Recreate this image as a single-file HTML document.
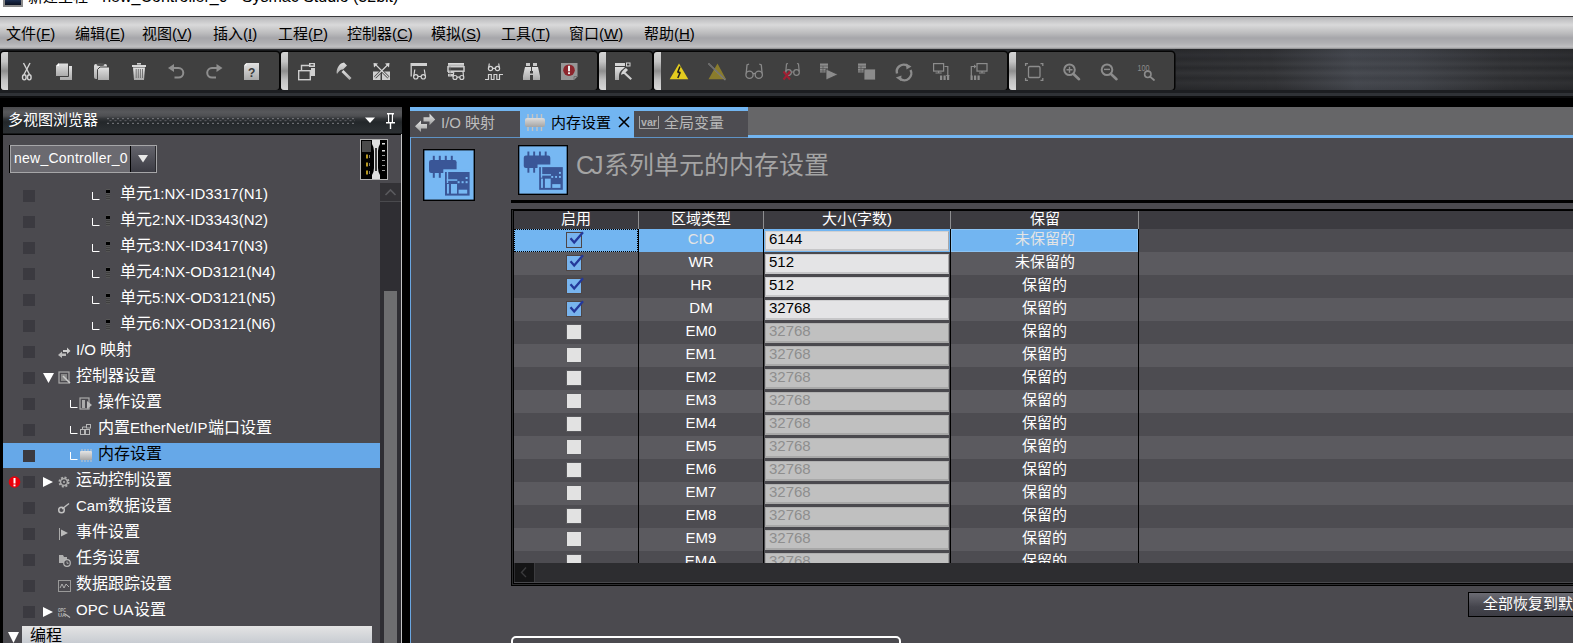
<!DOCTYPE html>
<html lang="zh-CN">
<head>
<meta charset="utf-8">
<style>
*{box-sizing:border-box;margin:0;padding:0}
html,body{width:1573px;height:643px;overflow:hidden;background:#000}
body{position:relative;font-family:"Liberation Sans",sans-serif;color:#fff}
.a{position:absolute}
#title{left:0;top:0;width:1573px;height:16px;background:#fff;overflow:hidden}
#title .t{left:28px;top:-11px;font-size:15px;color:#000;white-space:nowrap;line-height:16px}
#tline{left:0;top:16px;width:1573px;height:1px;background:#3a3a3c}
#menu{left:0;top:17px;width:1573px;height:32px;background:linear-gradient(#b4b4b6 0px,#c4c4c6 3px,#d9d9da 8px,#bcbcbe 16px,#a6a6aa 21px,#b0b0b3 26px,#c0c0c2 30px,#8a8a8c 32px)}
#menu span{position:absolute;top:8px;font-size:15px;color:#000;line-height:18px;white-space:nowrap}
#tb{left:0;top:49px;width:1573px;height:49px;background:#2a2c30}
#tbr{left:1175px;top:49px;width:398px;height:41px;background:linear-gradient(80deg,rgba(0,0,0,.12) 0%,rgba(0,0,0,0) 25%,rgba(140,150,170,.2) 45%,rgba(140,150,170,.16) 60%,rgba(0,0,0,0) 82%,rgba(0,0,0,.12) 100%),linear-gradient(#2a2b2e 0,#333438 6px,#2d2e31 10px,#36373a 15px,#2c2d30 19px,#38393c 24px,#2d2e31 29px,#353639 34px,#2a2b2e 41px)}
.grp{position:absolute;top:52px;height:38px;background:#404040;border-radius:3px;box-shadow:0 0 0 1.5px #050505}
.grip{position:absolute;top:52px;width:7px;height:38px;border-radius:3px 0 0 3px;background:linear-gradient(#d4d4d4,#c4c4c4 25%,#8e8e8e 50%,#c4c4c4 75%,#d8d8d8)}
#lp{left:3px;top:107px;width:399px;height:536px;background:#4b4a4f}
#lph{left:3px;top:107px;width:399px;height:28px;background:linear-gradient(#4a4a4d 0px,#58595c 5px,#4e4f52 9px,#303336 12px,#23272a 15px,#2a2e31 22px,#2c3033 26px,#000 27px,#000 28px)}
.tr{position:absolute;font-size:16px;line-height:20px;white-space:nowrap}
.l{font-size:15px}
.th{position:absolute;font-size:15px;line-height:20px;text-align:center;white-space:nowrap;color:#fff}
.td{position:absolute;font-size:15px;line-height:19px;text-align:center;white-space:nowrap}
</style>
</head>
<body>
<div id="title" class="a"><div class="a" style="left:3px;top:-8px;width:20px;height:15px;background:linear-gradient(#6a8ab8,#1a2a4a 60%,#0a1020);border:2px solid #8a8a8a"></div><div class="t a">新建工程<span style="font-size:16px"> - new_Controller_0 - Sysmac Studio (32bit)</span></div></div>
<div id="tline" class="a"></div>
<div id="menu" class="a">
<span style="left:6px">文件(<u>F</u>)</span>
<span style="left:75px">编辑(<u>E</u>)</span>
<span style="left:142px">视图(<u>V</u>)</span>
<span style="left:213px">插入(<u>I</u>)</span>
<span style="left:278px">工程(<u>P</u>)</span>
<span style="left:347px">控制器(<u>C</u>)</span>
<span style="left:431px">模拟(<u>S</u>)</span>
<span style="left:501px">工具(<u>T</u>)</span>
<span style="left:569px">窗口(<u>W</u>)</span>
<span style="left:644px">帮助(<u>H</u>)</span>
</div>
<div id="tb" class="a"></div>
<div id="tbr" class="a"></div>
<div class="grp" style="left:1px;width:278px"></div><div class="grip" style="left:1px"></div>
<div class="grp" style="left:281px;width:316px"></div><div class="grip" style="left:281px"></div>
<div class="grp" style="left:599px;width:53px"></div><div class="grip" style="left:599px"></div>
<div class="grp" style="left:654px;width:353px"></div><div class="grip" style="left:654px"></div>
<div class="grp" style="left:1009px;width:165px"></div><div class="grip" style="left:1009px"></div>
<div class="a" style="left:0;top:90px;width:1573px;height:3px;background:#1c1e21"></div>
<div class="a" style="left:0;top:93px;width:1573px;height:3px;background:#2f3236"></div>
<div class="a" style="left:0;top:96px;width:1573px;height:2px;background:#0c0d0e"></div>

<svg class="a" style="left:0;top:0" width="1573" height="100" viewBox="0 0 1573 100">
<defs>
<linearGradient id="lg" x1="0" y1="0" x2="0" y2="1"><stop offset="0" stop-color="#e2e2e2"/><stop offset="1" stop-color="#a9a9a9"/></linearGradient>
<linearGradient id="rbm" x1="0" y1="0" x2="0" y2="1"><stop offset="0" stop-color="#2c2d30"/><stop offset="0.3" stop-color="#3a3b3f"/><stop offset="0.5" stop-color="#2a2b2e"/><stop offset="0.75" stop-color="#38393c"/><stop offset="1" stop-color="#2b2c2f"/></linearGradient>
</defs>
<!-- scissors -->
<g fill="none" stroke="#d4d4d4" stroke-width="1.4">
<path d="M23.5,63 L29.5,74.5"/><path d="M30,63 L24,74.5"/>
<ellipse cx="24.3" cy="77.3" rx="1.8" ry="2.6"/><ellipse cx="29.3" cy="77.3" rx="1.8" ry="2.6"/>
</g>
<!-- copy -->
<rect x="60" y="66" width="12" height="14" fill="url(#lg)"/>
<path d="M58.5,63 L68.5,63 L68.5,76.5 L55.5,76.5 L55.5,66 Z" fill="url(#lg)" stroke="#404040" stroke-width="1"/>
<path d="M56,66 L59,63 L59,66 Z" fill="#fff"/>
<!-- paste -->
<rect x="94" y="64" width="13" height="15" rx="2" fill="url(#lg)"/>
<ellipse cx="100.5" cy="64.5" rx="4" ry="1.5" fill="#555"/>
<path d="M100,67 L109.5,67 L109.5,80.5 L97.5,80.5 L97.5,69.5 Z" fill="url(#lg)" stroke="#404040" stroke-width="1"/>
<!-- trash -->
<rect x="137" y="63" width="4" height="1.6" fill="#ccc"/>
<rect x="132" y="65" width="14" height="2" fill="#d8d8d8"/>
<path d="M133,67.5 L145,67.5 L144,80 L134,80 Z" fill="url(#lg)"/>
<path d="M136.2,69 V78 M138.3,69 V78 M140.4,69 V78 M142.5,69 V78" stroke="#6a6a6a" stroke-width="0.9"/>
<!-- undo -->
<path d="M168,68 L174,64 L174,72 Z" fill="#8e8e8e"/>
<path d="M173,68 L178.5,68 A4.8,4.8 0 0 1 178.5,77.6 L174.5,77.6" fill="none" stroke="#8e8e8e" stroke-width="2"/>
<!-- redo -->
<path d="M222.5,68 L216.5,64 L216.5,72 Z" fill="#8e8e8e"/>
<path d="M217.5,68 L212,68 A4.8,4.8 0 0 0 212,77.6 L216,77.6" fill="none" stroke="#8e8e8e" stroke-width="2"/>
<!-- help -->
<path d="M246.5,63 L259,63 L259,80 L244,80 L244,65.5 Z" fill="url(#lg)"/>
<path d="M244,65.5 L246.5,63 L246.5,65.5 Z" fill="#fff"/>
<text x="251.7" y="76.5" font-size="12" font-weight="bold" fill="#3a3a3a" text-anchor="middle" font-family="Liberation Sans">?</text>

<!-- window link -->
<g fill="none" stroke="#cdcdcd" stroke-width="1.4">
<rect x="298.7" y="70.7" width="11.6" height="9"/><path d="M301.5,70.5 V65.5 H309"/>
</g>
<rect x="309" y="63" width="6" height="4" fill="#d0d0d0"/><rect x="310.5" y="64" width="3" height="1.5" fill="#555"/>
<rect x="311" y="68" width="4" height="8" fill="#d0d0d0"/>
<!-- hammer -->
<path d="M341,63.5 L344,62.5 L347,65.5 L343,69.5 C341,69 339,71 337,74 C336,72 337,67 341,63.5 Z" fill="url(#lg)"/>
<path d="M343.5,70 L351.5,78 L349.5,80 L341.5,72 Z" fill="url(#lg)"/>
<!-- cross arrows -->
<rect x="373" y="71.5" width="7.5" height="8.5" fill="#cfcfcf"/><rect x="382" y="71.5" width="8" height="8.5" fill="#cfcfcf"/>
<g stroke="#404040" stroke-width="2.6"><path d="M375,64 L388.5,77.5 M388.5,64 L375,77.5"/></g>
<g stroke="#d8d8d8" stroke-width="1.1"><path d="M375,64 L388.5,77.5 M388.5,64 L375,77.5"/></g>
<path d="M373.5,63 L378,63.5 L374,67.5 Z M389.5,63 L385,63.5 L389,67.5 Z" fill="#d8d8d8"/>
<!-- glasses window -->
<rect x="410.5" y="63" width="16.5" height="3" fill="#d0d0d0"/>
<path d="M411.2,66 V76.5" stroke="#d0d0d0" stroke-width="1.3"/>
<g fill="none" stroke="#d4d4d4" stroke-width="1.2"><circle cx="415.8" cy="76.8" r="2.2"/><circle cx="423.3" cy="76.8" r="2.2"/><path d="M418,76.5 H421 M413.8,76 L414.8,69.5 M425.3,76 L424.3,69.5"/></g>
<!-- table glasses -->
<rect x="448" y="63" width="16" height="3.2" fill="url(#lg)"/>
<rect x="448" y="66.7" width="16" height="4.5" fill="none" stroke="#cfcfcf" stroke-width="1.5"/>
<rect x="448" y="71" width="5" height="5.5" fill="#cfcfcf"/><path d="M448,73.5 H453" stroke="#555" stroke-width="1"/><path d="M450,66.5 V76" stroke="#777" stroke-width="0.8"/>
<g fill="none" stroke="#d4d4d4" stroke-width="1.2"><circle cx="455" cy="77.5" r="2"/><circle cx="461.8" cy="77.5" r="2"/><path d="M457,77.2 H459.8 M453.2,76.8 L453.8,71.5 M463.6,76.8 L463,71.5"/></g>
<!-- glasses pulse -->
<g fill="none" stroke="#d4d4d4" stroke-width="1.2"><circle cx="490.5" cy="68.5" r="2.1"/><circle cx="497.5" cy="68.5" r="2.1"/><path d="M492.6,68.3 H495.4 M488.6,68 L489.3,63.5 M499.4,68 L498.7,63.5"/>
<path d="M485,79.5 H488.5 V74.5 H491.3 V79.5 H494 V74.5 H496.8 V79.5 H499.5 V74.5 H503"/></g>
<!-- binoculars -->
<rect x="526" y="63" width="4" height="3" fill="#c8c8c8"/><rect x="533" y="63" width="4" height="3" fill="#c8c8c8"/>
<path d="M525,67 H531 V71 H532 V67 H538 L540,76 V80 H533 V75 H530 V80 H523 V76 Z" fill="url(#lg)"/>
<rect x="530" y="71" width="3" height="2.5" fill="#404040"/>
<!-- error page -->
<path d="M561,63 H577.5 V76.5 L574,80 H561 Z" fill="#979797"/>
<path d="M574,80 V76.5 H577.5" fill="none" stroke="#6a6a6a" stroke-width="0.8"/>
<circle cx="569" cy="70.2" r="5.8" fill="#8d262d"/>
<rect x="568" y="65.8" width="2" height="5.5" fill="#eee"/><rect x="568" y="72.3" width="2" height="1.8" fill="#eee"/>
<!-- edit window hammer -->
<rect x="615" y="63" width="10" height="3" fill="#d4d4d4"/><rect x="626.5" y="63" width="3.5" height="3" fill="none" stroke="#d4d4d4" stroke-width="1"/>
<path d="M615,67 H625 L623,69 C620,71 619,73 619,76 V80 H615 Z" fill="url(#lg)"/>
<path d="M621,75 C621,72 623,70 626,68 L628,70 L624,74 C623,74 622,74 621,75 Z" fill="#d4d4d4"/>
<path d="M625,72 L632,78.5 L630.5,80 L623.5,73.5 Z" fill="#cfcfcf"/>
<!-- warning -->
<path d="M679,63.5 L688.3,79.2 H669.7 Z" fill="#e3cc1f"/>
<path d="M680,66.5 L677.6,72.5 M677.6,72.5 L680.3,72.3 M680.3,72.3 L677.8,78" fill="none" stroke="#1e1e1e" stroke-width="1.5" stroke-linejoin="round"/>
<!-- warning disabled -->
<path d="M717.5,63.5 L726,79.2 H708.5 Z" fill="#8a7c2c"/>
<path d="M708.5,63.5 L725.5,80" stroke="#8f8f8f" stroke-width="1.6"/>
<path d="M709,63.8 L726,80.3" stroke="#404040" stroke-width="0.6"/>
<!-- glasses -->
<g fill="none" stroke="#8a8a8a" stroke-width="1.3"><circle cx="749.5" cy="74.8" r="3.6"/><circle cx="758.8" cy="74.8" r="3.6"/><path d="M753,74 Q754,72.8 755.2,74 M746.2,73.5 L747,65 L749,64 M762.1,73.5 L761.3,65 L759.3,64"/></g>
<!-- glasses X -->
<g fill="none" stroke="#888" stroke-width="1.2"><circle cx="788.5" cy="72.5" r="2.8"/><circle cx="796.5" cy="72.5" r="2.8"/><path d="M791.3,72 H793.7 M785.8,71.5 L786.5,64 L788,63.5 M799.2,71.5 L798.5,64 L797,63.5"/></g>
<path d="M783.5,71.5 L790,79.5 M790,71.5 L783.5,79.5" stroke="#a01e32" stroke-width="2"/>
<!-- table play -->
<rect x="820" y="63.5" width="8" height="9" fill="#8c8c8c"/><path d="M820,66 H828 M820,68.5 H828 M820,71 H828 M823,66 V72.5" stroke="#555" stroke-width="0.7"/>
<path d="M826,69 L838,74.5 L826,80 Z" fill="#8c8c8c" stroke="#404040" stroke-width="0.8"/>
<!-- table stop -->
<rect x="858" y="63.5" width="8" height="9" fill="#8c8c8c"/><path d="M858,66 H866 M858,68.5 H866 M858,71 H866 M861,66 V72.5" stroke="#555" stroke-width="0.7"/>
<rect x="864" y="69" width="11.5" height="11" fill="#8c8c8c" stroke="#404040" stroke-width="0.8"/>
<!-- refresh -->
<g fill="none" stroke="#8c8c8c" stroke-width="2.4"><path d="M897,73.5 A7,7 0 0 1 907.5,65.8"/><path d="M910.5,70 A7,7 0 0 1 900,78.8"/></g>
<path d="M906,63.5 L911.5,66.5 L906.5,69.5 Z M901,81 L895.8,77.6 L901.5,75.5 Z" fill="#8c8c8c"/>
<!-- monitor down -->
<g fill="none" stroke="#8c8c8c" stroke-width="1.2"><rect x="933.6" y="63.6" width="10" height="7.5"/><path d="M938.6,71 V72.8 M935.5,73 H941.7 M944.5,66.5 H947.8 V76"/></g>
<path d="M945.8,75 L949.8,75 L947.8,77.5 Z" fill="#8c8c8c"/>
<rect x="940" y="75.5" width="2.2" height="4.5" fill="#8c8c8c"/><rect x="943.5" y="75.5" width="2.2" height="4.5" fill="#8c8c8c"/><rect x="947" y="75.5" width="2.2" height="4.5" fill="#8c8c8c"/>
<!-- up monitor -->
<g fill="none" stroke="#8c8c8c" stroke-width="1.2"><rect x="977" y="63.6" width="10" height="7.5"/><path d="M982,71 V72.8 M979,73 H985.2 M971.3,76 V66.5 H974.5"/></g>
<path d="M974,64.5 L976.5,66.5 L974,68.5 Z" fill="#8c8c8c"/>
<rect x="970.5" y="75.5" width="2.2" height="4.5" fill="#8c8c8c"/><rect x="974" y="75.5" width="2.2" height="4.5" fill="#8c8c8c"/><rect x="977.5" y="75.5" width="2.2" height="4.5" fill="#8c8c8c"/>
<!-- fit -->
<g fill="none" stroke="#8c8c8c" stroke-width="1.3"><rect x="1028.5" y="66.5" width="11.5" height="11" rx="1.2"/>
<path d="M1025.6,66 V63.6 H1028 M1040.5,63.6 H1042.8 V66 M1025.6,78 V80.3 H1028 M1040.5,80.3 H1042.8 V78"/></g>
<!-- zoom in -->
<g fill="none" stroke="#8c8c8c"><circle cx="1069.5" cy="69.8" r="5.3" stroke-width="2"/><path d="M1073.5,74 L1079,79.2" stroke-width="2.6" stroke-linecap="round"/><path d="M1066.5,69.8 H1072.5 M1069.5,66.8 V72.8" stroke-width="1.4"/></g>
<!-- zoom out -->
<g fill="none" stroke="#8c8c8c"><circle cx="1107" cy="69.8" r="5.3" stroke-width="2"/><path d="M1111,74 L1116.5,79.2" stroke-width="2.6" stroke-linecap="round"/><path d="M1104,69.4 H1110" stroke-width="1.4"/></g>
<!-- 100 -->
<text x="1137.5" y="71" font-size="8.5" fill="#8c8c8c" font-family="Liberation Sans" textLength="12" lengthAdjust="spacingAndGlyphs">100</text>
<g fill="none" stroke="#8c8c8c"><circle cx="1147.8" cy="74.3" r="3.2" stroke-width="1.6"/><path d="M1150,76.6 L1154,80" stroke-width="1.8" stroke-linecap="round"/></g>
</svg>
<div id="lp" class="a"></div>
<div id="lph" class="a"></div>
<div class="a" style="left:8px;top:110px;font-size:15px;line-height:20px;color:#fff;white-space:nowrap;font-weight:500">多视图浏览器</div>
<svg class="a" style="left:107px;top:117px" width="248" height="8"><defs><pattern id="dpa" width="5" height="8" patternUnits="userSpaceOnUse"><rect x="0" y="1" width="2" height="1.2" fill="#6c6e72"/><rect x="2.5" y="3" width="2" height="1.2" fill="#55575b"/><rect x="0" y="5.8" width="2" height="1.2" fill="#6c6e72"/></pattern></defs><rect width="248" height="8" fill="url(#dpa)"/></svg>
<svg class="a" style="left:360px;top:110px" width="40" height="22"><path d="M5,7.5 H15 L10,13 Z" fill="#fff"/><path d="M27,3 H34 V4.5 H33 V12 H35 V13.5 H31.2 V19 H29.8 V13.5 H26 V12 H28 V4.5 H27 Z" fill="#fff"/><rect x="29.2" y="4.5" width="2.6" height="7.5" fill="#24272a"/></svg>
<div class="a" style="left:3px;top:135px;width:398px;height:508px;background:#4b4a4f"></div>
<div class="a" style="left:401px;top:134px;width:1px;height:509px;background:#c4c4c4"></div>
<div class="a" style="left:10px;top:145px;width:147px;height:28px;border:1px solid #a6a6a8;background:#6b6a70"></div><div class="a" style="left:9px;top:145px;width:1px;height:28px;background:#000"></div>
<div class="a" style="left:130px;top:146px;width:26px;height:26px;background:linear-gradient(#64646c,#3c3c44);border-left:1px solid #000;border-right:1px solid #2a2a2e"></div>
<svg class="a" style="left:136px;top:153px" width="14" height="12"><path d="M2,2 H12 L7,9.5 Z" fill="#e8e8e8"/></svg>
<div class="a" style="left:14px;top:148px;font-size:14px;line-height:20px;color:#fff;white-space:nowrap;letter-spacing:0.25px">new_Controller_0</div>
<svg class="a" style="left:360px;top:139px" width="28" height="41" viewBox="0 0 28 41">
<rect x="0.5" y="0.5" width="27" height="40" fill="#000" stroke="#b4b4b4" stroke-width="1"/>
<rect x="2" y="2" width="9" height="11" fill="#4a4a4a"/>
<path d="M12,1 H20 V5 Q18,8 18,12 V29 Q18,33 20,36 V40 H12 V36 Q14,33 14,29 V12 Q14,8 12,5 Z" fill="#e0e0e0"/><rect x="15.2" y="9" width="1.6" height="23" fill="#111"/>
<rect x="6" y="15.5" width="2" height="4" fill="#b8981e"/><rect x="6" y="23.5" width="2" height="4" fill="#b8981e"/><rect x="6" y="31.5" width="2" height="4" fill="#b8981e"/><rect x="9" y="16" width="1" height="3" fill="#777"/><rect x="9" y="24" width="1" height="3" fill="#777"/><rect x="9" y="32" width="1" height="3" fill="#777"/>
<rect x="22" y="4" width="3" height="1.5" fill="#ddd"/><rect x="22" y="11" width="3" height="1.5" fill="#ddd"/><rect x="22" y="16" width="3" height="1" fill="#999"/><rect x="22" y="21" width="3" height="1" fill="#999"/><rect x="22" y="26" width="3" height="1" fill="#999"/><rect x="22" y="31" width="3" height="1" fill="#999"/>
</svg>
<div class="a" style="left:3px;top:443px;width:377px;height:25px;background:#66a8e8"></div>
<div class="a" style="left:380px;top:183px;width:21px;height:460px;background:#2f2e33"></div>
<div class="a" style="left:380px;top:183px;width:21px;height:19px;background:#333236;border-bottom:1px solid #4a4a4e"></div>
<svg class="a" style="left:380px;top:183px" width="21" height="19"><path d="M5.5,12 L10.5,7 L15.5,12" fill="none" stroke="#5a5a5e" stroke-width="1.6"/></svg>
<div class="a" style="left:384px;top:291px;width:13px;height:352px;background:#6e6e70"></div>
<div class="a" style="left:22px;top:626px;width:350px;height:17px;background:linear-gradient(#e4e4e4,#c8ccd2)"></div>
<div class="a" style="left:30px;top:625px;font-size:16px;line-height:22px;color:#000">编程</div>
<div class="tr" style="left:120px;top:184px;color:#fff">单元<span class="l">1:NX-ID3317(N1)</span></div>
<div class="tr" style="left:120px;top:210px;color:#fff">单元<span class="l">2:NX-ID3343(N2)</span></div>
<div class="tr" style="left:120px;top:236px;color:#fff">单元<span class="l">3:NX-ID3417(N3)</span></div>
<div class="tr" style="left:120px;top:262px;color:#fff">单元<span class="l">4:NX-OD3121(N4)</span></div>
<div class="tr" style="left:120px;top:288px;color:#fff">单元<span class="l">5:NX-OD3121(N5)</span></div>
<div class="tr" style="left:120px;top:314px;color:#fff">单元<span class="l">6:NX-OD3121(N6)</span></div>
<div class="tr" style="left:76px;top:340px;color:#fff"><span class="l">I/O </span>映射</div>
<div class="tr" style="left:76px;top:366px;color:#fff">控制器设置</div>
<div class="tr" style="left:98px;top:392px;color:#fff">操作设置</div>
<div class="tr" style="left:98px;top:418px;color:#fff">内置<span class="l">EtherNet/IP</span>端口设置</div>
<div class="tr" style="left:98px;top:444px;color:#000">内存设置</div>
<div class="tr" style="left:76px;top:470px;color:#fff">运动控制设置</div>
<div class="tr" style="left:76px;top:496px;color:#fff"><span class="l">Cam</span>数据设置</div>
<div class="tr" style="left:76px;top:522px;color:#fff">事件设置</div>
<div class="tr" style="left:76px;top:548px;color:#fff">任务设置</div>
<div class="tr" style="left:76px;top:574px;color:#fff">数据跟踪设置</div>
<div class="tr" style="left:76px;top:600px;color:#fff"><span class="l">OPC UA</span>设置</div>
<svg class="a" style="left:0;top:0" width="410" height="643" viewBox="0 0 410 643">
<rect x="23" y="190" width="12" height="12" fill="#3b3a40"/>
<path d="M92.5,192 V199.5 H99.5" fill="none" stroke="#fff" stroke-width="1"/>
<rect x="106" y="189" width="4" height="11" fill="#555"/><rect x="106" y="190" width="4" height="3" fill="#000"/><path d="M106,194.5 H110 M106,196.5 H110 M106,198.5 H110" stroke="#3a3a3a" stroke-width="0.8"/>
<rect x="23" y="216" width="12" height="12" fill="#3b3a40"/>
<path d="M92.5,218 V225.5 H99.5" fill="none" stroke="#fff" stroke-width="1"/>
<rect x="106" y="215" width="4" height="11" fill="#555"/><rect x="106" y="216" width="4" height="3" fill="#000"/><path d="M106,220.5 H110 M106,222.5 H110 M106,224.5 H110" stroke="#3a3a3a" stroke-width="0.8"/>
<rect x="23" y="242" width="12" height="12" fill="#3b3a40"/>
<path d="M92.5,244 V251.5 H99.5" fill="none" stroke="#fff" stroke-width="1"/>
<rect x="106" y="241" width="4" height="11" fill="#555"/><rect x="106" y="242" width="4" height="3" fill="#000"/><path d="M106,246.5 H110 M106,248.5 H110 M106,250.5 H110" stroke="#3a3a3a" stroke-width="0.8"/>
<rect x="23" y="268" width="12" height="12" fill="#3b3a40"/>
<path d="M92.5,270 V277.5 H99.5" fill="none" stroke="#fff" stroke-width="1"/>
<rect x="106" y="267" width="4" height="11" fill="#555"/><rect x="106" y="268" width="4" height="3" fill="#000"/><path d="M106,272.5 H110 M106,274.5 H110 M106,276.5 H110" stroke="#3a3a3a" stroke-width="0.8"/>
<rect x="23" y="294" width="12" height="12" fill="#3b3a40"/>
<path d="M92.5,296 V303.5 H99.5" fill="none" stroke="#fff" stroke-width="1"/>
<rect x="106" y="293" width="4" height="11" fill="#555"/><rect x="106" y="294" width="4" height="3" fill="#000"/><path d="M106,298.5 H110 M106,300.5 H110 M106,302.5 H110" stroke="#3a3a3a" stroke-width="0.8"/>
<rect x="23" y="320" width="12" height="12" fill="#3b3a40"/>
<path d="M92.5,322 V329.5 H99.5" fill="none" stroke="#fff" stroke-width="1"/>
<rect x="106" y="319" width="4" height="11" fill="#555"/><rect x="106" y="320" width="4" height="3" fill="#000"/><path d="M106,324.5 H110 M106,326.5 H110 M106,328.5 H110" stroke="#3a3a3a" stroke-width="0.8"/>
<rect x="23" y="346" width="12" height="12" fill="#3b3a40"/>
<path d="M63,350 H67 V347.5 L70.5,351 L67,354 V352 H63 Z" fill="#cfcfcf"/><path d="M66,353.5 H62 V351.5 L58,355 L62,358 V356 H66 Z" fill="#bdbdbd"/>
<rect x="23" y="372" width="12" height="12" fill="#3b3a40"/>
<path d="M43,373 H54 L48.5,383 Z" fill="#fff"/>
<rect x="59" y="372" width="10" height="11" fill="none" stroke="#aaa" stroke-width="1.2"/><rect x="61" y="374" width="6" height="7" fill="#888"/><path d="M63,376 L70,383" stroke="#ccc" stroke-width="1.5"/>
<rect x="23" y="398" width="12" height="12" fill="#3b3a40"/>
<path d="M70.5,400 V407.5 H77.5" fill="none" stroke="#fff" stroke-width="1"/>
<rect x="80" y="398" width="9" height="11" fill="none" stroke="#aaa" stroke-width="1.2"/><rect x="82" y="400" width="3" height="8" fill="#aaa"/><path d="M87,401 L92,405 L87,409 Z" fill="#bbb"/>
<rect x="23" y="424" width="12" height="12" fill="#3b3a40"/>
<path d="M70.5,426 V433.5 H77.5" fill="none" stroke="#fff" stroke-width="1"/>
<g fill="none" stroke="#b8b8b8" stroke-width="1"><rect x="80.5" y="429.5" width="4" height="5"/><rect x="85.5" y="429.5" width="4" height="5"/><rect x="86.5" y="424.5" width="4" height="3.5"/><path d="M82.5,429.5 V427 H86.5"/></g>
<rect x="23" y="450" width="12" height="12" fill="#3b3a40"/>
<path d="M70.5,452 V459.5 H77.5" fill="none" stroke="#fff" stroke-width="1"/>
<defs><linearGradient id="mg" x1="0" y1="0" x2="0" y2="1"><stop offset="0" stop-color="#e4e4e4"/><stop offset="1" stop-color="#a8a8a8"/></linearGradient></defs><rect x="80" y="451" width="12" height="9" rx="1" fill="url(#mg)"/><path d="M82,449 V462 M85,449 V462 M88,449 V462 M91,449 V462" stroke="#c8c8c8" stroke-width="1" stroke-dasharray="2,9"/>
<rect x="23" y="476" width="12" height="12" fill="#3b3a40"/>
<path d="M43,477 L53,482 L43,487 Z" fill="#fff"/>
<circle cx="64" cy="482" r="4.2" fill="none" stroke="#b0b0b0" stroke-width="2.6" stroke-dasharray="1.8,1.5"/><circle cx="64" cy="482" r="3.5" fill="none" stroke="#aaa" stroke-width="1.4"/><rect x="63" y="481" width="2" height="2" fill="#999"/>
<rect x="23" y="502" width="12" height="12" fill="#3b3a40"/>
<circle cx="61.5" cy="510" r="2.8" fill="none" stroke="#c0c0c0" stroke-width="1.5"/><path d="M62,509 L69,503.5" stroke="#c0c0c0" stroke-width="1.4"/>
<rect x="23" y="528" width="12" height="12" fill="#3b3a40"/>
<path d="M59.5,528 V540" stroke="#aaa" stroke-width="1"/><path d="M61,529.5 L68,533 L61,536.5 Z" fill="#bbb"/>
<rect x="23" y="554" width="12" height="12" fill="#3b3a40"/>
<path d="M59,555 H63 L64,557 H67 V563 H59 Z" fill="#b0b0b0"/><circle cx="67" cy="563" r="3.3" fill="#4b4a4f" stroke="#b8b8b8" stroke-width="1.2"/><path d="M67,561.5 V563.3 H68.5" stroke="#b8b8b8" stroke-width="0.9" fill="none"/>
<rect x="23" y="580" width="12" height="12" fill="#3b3a40"/>
<rect x="58.5" y="580.5" width="12" height="11" fill="none" stroke="#999" stroke-width="1"/><path d="M60,588 L62,584 L64,588 L66,584 L69,587" fill="none" stroke="#b0b0b0" stroke-width="1"/>
<rect x="23" y="606" width="12" height="12" fill="#3b3a40"/>
<path d="M43,607 L53,612 L43,617 Z" fill="#fff"/>
<text x="58" y="611.5" font-size="6" font-weight="bold" fill="#b8b8b8" font-family="Liberation Sans" textLength="8" lengthAdjust="spacingAndGlyphs">OPC</text><text x="58" y="617" font-size="6" font-weight="bold" fill="#b8b8b8" font-family="Liberation Sans" textLength="8" lengthAdjust="spacingAndGlyphs">UA</text><path d="M65,614 L70,617.5" stroke="#b8b8b8" stroke-width="1.2"/>
<circle cx="14.5" cy="482" r="5.8" fill="#e8000b"/><rect x="13.5" y="478" width="2" height="5.5" fill="#fff"/><rect x="13.5" y="484.5" width="2" height="1.8" fill="#fff"/>
<path d="M8,632 H19 L13.5,643 Z" fill="#fff"/>
</svg>

<div class="a" style="left:410px;top:107px;width:338px;height:4px;background:#72b5f1"></div>
<div class="a" style="left:748px;top:107px;width:825px;height:28px;background:#666668"></div>
<div class="a" style="left:748px;top:135px;width:825px;height:3px;background:#72b5f1"></div>
<div class="a" style="left:410px;top:111px;width:110px;height:26px;background:#4d4c51"></div>
<div class="a" style="left:520px;top:107px;width:114px;height:31px;background:#72b5f1"></div>
<div class="a" style="left:634px;top:111px;width:114px;height:26px;background:#4d4c51"></div>
<div class="a" style="left:410px;top:137px;width:110px;height:1px;background:#5e92c4"></div>
<div class="a" style="left:634px;top:137px;width:114px;height:1px;background:#5e92c4"></div>
<div class="a" style="left:410px;top:138px;width:1163px;height:505px;background:#4b4a4f"></div>
<div class="a" style="left:410px;top:137px;width:1px;height:506px;background:#6aa6e0"></div>
<svg class="a" style="left:410px;top:107px" width="340" height="31" viewBox="410 107 340 31">
<defs><linearGradient id="ag" x1="0" y1="0" x2="0" y2="1"><stop offset="0" stop-color="#e8e8e8"/><stop offset="1" stop-color="#9c9c9c"/></linearGradient>
<linearGradient id="cg" x1="0" y1="0" x2="0" y2="1"><stop offset="0" stop-color="#dcdcdc"/><stop offset="1" stop-color="#a4a4a4"/></linearGradient></defs>
<path d="M423.5,117.3 H429.5 V113.5 L435.2,119.4 L429.5,125.2 V121.6 H423.5 Z" fill="url(#ag)"/>
<path d="M427,124 H421 V120.5 L415,126.3 L421,132 V128.4 H427 Z" fill="url(#ag)"/>
<rect x="525" y="118" width="20" height="9" rx="2" fill="url(#cg)"/>
<path d="M528,114 V131 M532.5,114 V131 M537,114 V131 M541.5,114 V131" stroke="#c4c4c4" stroke-width="1.4" stroke-dasharray="4,9"/>
<path d="M619,117 L629,127 M629,117 L619,127" stroke="#000" stroke-width="1.6"/>
<path d="M639.5,116 V128.5 H658.5 V116" fill="none" stroke="#a4a4a4" stroke-width="1"/>
<text x="641" y="125.5" font-size="11" font-weight="bold" fill="#b0b0b0" font-family="Liberation Sans" textLength="16" lengthAdjust="spacingAndGlyphs">var</text>
</svg>
<div class="a" style="left:441px;top:113px;font-size:15px;line-height:20px;color:#bdbdbd;white-space:nowrap">I/O 映射</div>
<div class="a" style="left:551px;top:113px;font-size:15px;line-height:20px;color:#000;white-space:nowrap">内存设置</div>
<div class="a" style="left:664px;top:113px;font-size:15px;line-height:20px;color:#b8b8b8;white-space:nowrap">全局变量</div>

<svg class="a" style="left:423px;top:149px" width="52" height="52" viewBox="0 0 52 52">
<rect x="0.7" y="0.7" width="50.6" height="50.6" fill="#77b8f3" stroke="#000" stroke-width="1.4"/>
<g fill="#3a5697">
<rect x="6" y="11" width="27.6" height="13" rx="2.2"/>
<rect x="9.8" y="6.8" width="2" height="5"/><rect x="15.8" y="6.8" width="2" height="5"/><rect x="21.8" y="6.8" width="2" height="5"/><rect x="27.8" y="6.8" width="2" height="5"/>
<rect x="9.8" y="23" width="2" height="5.8"/><rect x="15.8" y="23" width="2" height="5.8"/>
</g>
<rect x="20.3" y="20.3" width="27" height="27" fill="#77b8f3"/>
<rect x="22" y="23" width="24.6" height="23.6" fill="#3a5697"/>
<g fill="#77b8f3">
<rect x="23.8" y="23" width="1.4" height="11"/><rect x="23.8" y="30.3" width="10.5" height="1.5"/>
<rect x="34.6" y="32.2" width="2" height="2"/><rect x="38.6" y="32.2" width="2" height="2"/><rect x="42.6" y="32.2" width="2" height="2"/><rect x="42.6" y="28" width="2" height="2"/>
<rect x="24" y="35" width="1.9" height="9.6"/><rect x="28" y="35" width="6" height="9.6"/><rect x="35.6" y="40.7" width="8.6" height="3.9"/>
</g>
</svg>
<svg class="a" style="left:518px;top:145px" width="50" height="50" viewBox="0 0 52 52">
<rect x="0.7" y="0.7" width="50.6" height="50.6" fill="#77b8f3" stroke="#000" stroke-width="1.4"/>
<g fill="#3a5697">
<rect x="6" y="11" width="27.6" height="13" rx="2.2"/>
<rect x="9.8" y="6.8" width="2" height="5"/><rect x="15.8" y="6.8" width="2" height="5"/><rect x="21.8" y="6.8" width="2" height="5"/><rect x="27.8" y="6.8" width="2" height="5"/>
<rect x="9.8" y="23" width="2" height="5.8"/><rect x="15.8" y="23" width="2" height="5.8"/>
</g>
<rect x="20.3" y="20.3" width="27" height="27" fill="#77b8f3"/>
<rect x="22" y="23" width="24.6" height="23.6" fill="#3a5697"/>
<g fill="#77b8f3">
<rect x="23.8" y="23" width="1.4" height="11"/><rect x="23.8" y="30.3" width="10.5" height="1.5"/>
<rect x="34.6" y="32.2" width="2" height="2"/><rect x="38.6" y="32.2" width="2" height="2"/><rect x="42.6" y="32.2" width="2" height="2"/><rect x="42.6" y="28" width="2" height="2"/>
<rect x="24" y="35" width="1.9" height="9.6"/><rect x="28" y="35" width="6" height="9.6"/><rect x="35.6" y="40.7" width="8.6" height="3.9"/>
</g>
</svg>
<div class="a" style="left:576px;top:147px;font-size:25px;line-height:36px;color:#a4a4a4;white-space:nowrap"><span style="letter-spacing:-3px">CJ</span><span style="margin-left:3px">系列单元的内存设置</span></div>
<div class="a" style="left:511px;top:200px;width:1062px;height:3px;background:#000"></div>
<div class="a" style="left:511px;top:209px;width:1062px;height:377px;background:#000"></div>
<div class="a" style="left:514px;top:211px;width:1059px;height:18px;background:#3c3b40"></div>
<div class="a" style="left:638px;top:211px;width:1px;height:18px;background:#8e8e90"></div>
<div class="a" style="left:763px;top:211px;width:1px;height:18px;background:#8e8e90"></div>
<div class="a" style="left:950px;top:211px;width:1px;height:18px;background:#8e8e90"></div>
<div class="a" style="left:1138px;top:211px;width:1px;height:18px;background:#8e8e90"></div>
<div class="th" style="left:514px;top:209px;width:124px">启用</div>
<div class="th" style="left:639px;top:209px;width:124px">区域类型</div>
<div class="th" style="left:764px;top:209px;width:186px">大小(字数)</div>
<div class="th" style="left:951px;top:209px;width:187px">保留</div>
<div class="a" style="left:514px;top:229px;width:1059px;height:334px;overflow:hidden">
<div class="a" style="left:0;top:0px;width:1059px;height:23px;background:#4d4c51"></div>
<div class="a" style="left:0;top:0;width:124px;height:23px;background:#72b5f1;outline:1px dotted #fff;outline-offset:-1px"></div>
<div class="a" style="left:0;top:0;width:124px;height:23px;border:1px dotted #000"></div>
<div class="a" style="left:125px;top:0;width:124px;height:23px;background:#72b5f1"></div>
<div class="a" style="left:250px;top:0;width:186px;height:23px;background:#72b5f1"></div>
<div class="a" style="left:437px;top:0;width:187px;height:23px;background:#72b5f1;border:1px solid #8cc4f4"></div>
<div class="a" style="left:52px;top:3px;width:16px;height:16px;background:#78b4ee;border:1px solid #4e4646"></div>
<svg class="a" style="left:52px;top:1px" width="20" height="20"><path d="M4.5,8.3 L8.2,12.5 L17,2.3" fill="none" stroke="#24389a" stroke-width="2.3"/></svg>
<div class="td" style="left:125px;top:0px;width:124px;color:#e4e4e4">CIO</div>
<div class="a" style="left:251px;top:2px;width:184px;height:20px;background:#e4e4e6;border-left:1px solid #bdbdbf;border-right:1px solid #a8a8aa;border-top:1px solid #d0d0d2;border-bottom:2px solid #c6c6c8"></div>
<div class="td" style="left:255px;top:0px;text-align:left;color:#000">6144</div>
<div class="td" style="left:437px;top:0px;width:187px;color:#e4e4e4">未保留的</div>
<div class="a" style="left:0;top:23px;width:1059px;height:23px;background:#5b5a5f"></div>
<div class="a" style="left:52px;top:26px;width:16px;height:16px;background:#78b4ee;border:1px solid #4e4646"></div>
<svg class="a" style="left:52px;top:24px" width="20" height="20"><path d="M4.5,8.3 L8.2,12.5 L17,2.3" fill="none" stroke="#24389a" stroke-width="2.3"/></svg>
<div class="td" style="left:125px;top:23px;width:124px;color:#fff">WR</div>
<div class="a" style="left:250px;top:23px;width:186px;height:23px;background:#4a494e"></div><div class="a" style="left:251px;top:25px;width:184px;height:20px;background:#e4e4e6;border-left:1px solid #bdbdbf;border-right:1px solid #a8a8aa;border-top:1px solid #d0d0d2;border-bottom:2px solid #c6c6c8"></div>
<div class="td" style="left:255px;top:23px;text-align:left;color:#000">512</div>
<div class="td" style="left:437px;top:23px;width:187px;color:#fff">未保留的</div>
<div class="a" style="left:0;top:46px;width:1059px;height:23px;background:#4d4c51"></div>
<div class="a" style="left:52px;top:49px;width:16px;height:16px;background:#78b4ee;border:1px solid #4e4646"></div>
<svg class="a" style="left:52px;top:47px" width="20" height="20"><path d="M4.5,8.3 L8.2,12.5 L17,2.3" fill="none" stroke="#24389a" stroke-width="2.3"/></svg>
<div class="td" style="left:125px;top:46px;width:124px;color:#fff">HR</div>
<div class="a" style="left:250px;top:46px;width:186px;height:23px;background:#4a494e"></div><div class="a" style="left:251px;top:48px;width:184px;height:20px;background:#e4e4e6;border-left:1px solid #bdbdbf;border-right:1px solid #a8a8aa;border-top:1px solid #d0d0d2;border-bottom:2px solid #c6c6c8"></div>
<div class="td" style="left:255px;top:46px;text-align:left;color:#000">512</div>
<div class="td" style="left:437px;top:46px;width:187px;color:#fff">保留的</div>
<div class="a" style="left:0;top:69px;width:1059px;height:23px;background:#5b5a5f"></div>
<div class="a" style="left:52px;top:72px;width:16px;height:16px;background:#78b4ee;border:1px solid #4e4646"></div>
<svg class="a" style="left:52px;top:70px" width="20" height="20"><path d="M4.5,8.3 L8.2,12.5 L17,2.3" fill="none" stroke="#24389a" stroke-width="2.3"/></svg>
<div class="td" style="left:125px;top:69px;width:124px;color:#fff">DM</div>
<div class="a" style="left:250px;top:69px;width:186px;height:23px;background:#4a494e"></div><div class="a" style="left:251px;top:71px;width:184px;height:20px;background:#e4e4e6;border-left:1px solid #bdbdbf;border-right:1px solid #a8a8aa;border-top:1px solid #d0d0d2;border-bottom:2px solid #c6c6c8"></div>
<div class="td" style="left:255px;top:69px;text-align:left;color:#000">32768</div>
<div class="td" style="left:437px;top:69px;width:187px;color:#fff">保留的</div>
<div class="a" style="left:0;top:92px;width:1059px;height:23px;background:#4d4c51"></div>
<div class="a" style="left:52px;top:95px;width:16px;height:16px;background:#e2e2e2;border:1px solid #5a5a5e"></div>
<div class="td" style="left:125px;top:92px;width:124px;color:#fff">EM0</div>
<div class="a" style="left:250px;top:92px;width:186px;height:23px;background:#4a494e"></div><div class="a" style="left:251px;top:94px;width:184px;height:20px;background:#c0c0c0;border-left:1px solid #a6a6a6;border-right:1px solid #9a9a9a;border-top:1px solid #b0b0b0;border-bottom:2px solid #a8a8a8"></div>
<div class="td" style="left:255px;top:92px;text-align:left;color:#8e8e8e">32768</div>
<div class="td" style="left:437px;top:92px;width:187px;color:#fff">保留的</div>
<div class="a" style="left:0;top:115px;width:1059px;height:23px;background:#5b5a5f"></div>
<div class="a" style="left:52px;top:118px;width:16px;height:16px;background:#e2e2e2;border:1px solid #5a5a5e"></div>
<div class="td" style="left:125px;top:115px;width:124px;color:#fff">EM1</div>
<div class="a" style="left:250px;top:115px;width:186px;height:23px;background:#4a494e"></div><div class="a" style="left:251px;top:117px;width:184px;height:20px;background:#c0c0c0;border-left:1px solid #a6a6a6;border-right:1px solid #9a9a9a;border-top:1px solid #b0b0b0;border-bottom:2px solid #a8a8a8"></div>
<div class="td" style="left:255px;top:115px;text-align:left;color:#8e8e8e">32768</div>
<div class="td" style="left:437px;top:115px;width:187px;color:#fff">保留的</div>
<div class="a" style="left:0;top:138px;width:1059px;height:23px;background:#4d4c51"></div>
<div class="a" style="left:52px;top:141px;width:16px;height:16px;background:#e2e2e2;border:1px solid #5a5a5e"></div>
<div class="td" style="left:125px;top:138px;width:124px;color:#fff">EM2</div>
<div class="a" style="left:250px;top:138px;width:186px;height:23px;background:#4a494e"></div><div class="a" style="left:251px;top:140px;width:184px;height:20px;background:#c0c0c0;border-left:1px solid #a6a6a6;border-right:1px solid #9a9a9a;border-top:1px solid #b0b0b0;border-bottom:2px solid #a8a8a8"></div>
<div class="td" style="left:255px;top:138px;text-align:left;color:#8e8e8e">32768</div>
<div class="td" style="left:437px;top:138px;width:187px;color:#fff">保留的</div>
<div class="a" style="left:0;top:161px;width:1059px;height:23px;background:#5b5a5f"></div>
<div class="a" style="left:52px;top:164px;width:16px;height:16px;background:#e2e2e2;border:1px solid #5a5a5e"></div>
<div class="td" style="left:125px;top:161px;width:124px;color:#fff">EM3</div>
<div class="a" style="left:250px;top:161px;width:186px;height:23px;background:#4a494e"></div><div class="a" style="left:251px;top:163px;width:184px;height:20px;background:#c0c0c0;border-left:1px solid #a6a6a6;border-right:1px solid #9a9a9a;border-top:1px solid #b0b0b0;border-bottom:2px solid #a8a8a8"></div>
<div class="td" style="left:255px;top:161px;text-align:left;color:#8e8e8e">32768</div>
<div class="td" style="left:437px;top:161px;width:187px;color:#fff">保留的</div>
<div class="a" style="left:0;top:184px;width:1059px;height:23px;background:#4d4c51"></div>
<div class="a" style="left:52px;top:187px;width:16px;height:16px;background:#e2e2e2;border:1px solid #5a5a5e"></div>
<div class="td" style="left:125px;top:184px;width:124px;color:#fff">EM4</div>
<div class="a" style="left:250px;top:184px;width:186px;height:23px;background:#4a494e"></div><div class="a" style="left:251px;top:186px;width:184px;height:20px;background:#c0c0c0;border-left:1px solid #a6a6a6;border-right:1px solid #9a9a9a;border-top:1px solid #b0b0b0;border-bottom:2px solid #a8a8a8"></div>
<div class="td" style="left:255px;top:184px;text-align:left;color:#8e8e8e">32768</div>
<div class="td" style="left:437px;top:184px;width:187px;color:#fff">保留的</div>
<div class="a" style="left:0;top:207px;width:1059px;height:23px;background:#5b5a5f"></div>
<div class="a" style="left:52px;top:210px;width:16px;height:16px;background:#e2e2e2;border:1px solid #5a5a5e"></div>
<div class="td" style="left:125px;top:207px;width:124px;color:#fff">EM5</div>
<div class="a" style="left:250px;top:207px;width:186px;height:23px;background:#4a494e"></div><div class="a" style="left:251px;top:209px;width:184px;height:20px;background:#c0c0c0;border-left:1px solid #a6a6a6;border-right:1px solid #9a9a9a;border-top:1px solid #b0b0b0;border-bottom:2px solid #a8a8a8"></div>
<div class="td" style="left:255px;top:207px;text-align:left;color:#8e8e8e">32768</div>
<div class="td" style="left:437px;top:207px;width:187px;color:#fff">保留的</div>
<div class="a" style="left:0;top:230px;width:1059px;height:23px;background:#4d4c51"></div>
<div class="a" style="left:52px;top:233px;width:16px;height:16px;background:#e2e2e2;border:1px solid #5a5a5e"></div>
<div class="td" style="left:125px;top:230px;width:124px;color:#fff">EM6</div>
<div class="a" style="left:250px;top:230px;width:186px;height:23px;background:#4a494e"></div><div class="a" style="left:251px;top:232px;width:184px;height:20px;background:#c0c0c0;border-left:1px solid #a6a6a6;border-right:1px solid #9a9a9a;border-top:1px solid #b0b0b0;border-bottom:2px solid #a8a8a8"></div>
<div class="td" style="left:255px;top:230px;text-align:left;color:#8e8e8e">32768</div>
<div class="td" style="left:437px;top:230px;width:187px;color:#fff">保留的</div>
<div class="a" style="left:0;top:253px;width:1059px;height:23px;background:#5b5a5f"></div>
<div class="a" style="left:52px;top:256px;width:16px;height:16px;background:#e2e2e2;border:1px solid #5a5a5e"></div>
<div class="td" style="left:125px;top:253px;width:124px;color:#fff">EM7</div>
<div class="a" style="left:250px;top:253px;width:186px;height:23px;background:#4a494e"></div><div class="a" style="left:251px;top:255px;width:184px;height:20px;background:#c0c0c0;border-left:1px solid #a6a6a6;border-right:1px solid #9a9a9a;border-top:1px solid #b0b0b0;border-bottom:2px solid #a8a8a8"></div>
<div class="td" style="left:255px;top:253px;text-align:left;color:#8e8e8e">32768</div>
<div class="td" style="left:437px;top:253px;width:187px;color:#fff">保留的</div>
<div class="a" style="left:0;top:276px;width:1059px;height:23px;background:#4d4c51"></div>
<div class="a" style="left:52px;top:279px;width:16px;height:16px;background:#e2e2e2;border:1px solid #5a5a5e"></div>
<div class="td" style="left:125px;top:276px;width:124px;color:#fff">EM8</div>
<div class="a" style="left:250px;top:276px;width:186px;height:23px;background:#4a494e"></div><div class="a" style="left:251px;top:278px;width:184px;height:20px;background:#c0c0c0;border-left:1px solid #a6a6a6;border-right:1px solid #9a9a9a;border-top:1px solid #b0b0b0;border-bottom:2px solid #a8a8a8"></div>
<div class="td" style="left:255px;top:276px;text-align:left;color:#8e8e8e">32768</div>
<div class="td" style="left:437px;top:276px;width:187px;color:#fff">保留的</div>
<div class="a" style="left:0;top:299px;width:1059px;height:23px;background:#5b5a5f"></div>
<div class="a" style="left:52px;top:302px;width:16px;height:16px;background:#e2e2e2;border:1px solid #5a5a5e"></div>
<div class="td" style="left:125px;top:299px;width:124px;color:#fff">EM9</div>
<div class="a" style="left:250px;top:299px;width:186px;height:23px;background:#4a494e"></div><div class="a" style="left:251px;top:301px;width:184px;height:20px;background:#c0c0c0;border-left:1px solid #a6a6a6;border-right:1px solid #9a9a9a;border-top:1px solid #b0b0b0;border-bottom:2px solid #a8a8a8"></div>
<div class="td" style="left:255px;top:299px;text-align:left;color:#8e8e8e">32768</div>
<div class="td" style="left:437px;top:299px;width:187px;color:#fff">保留的</div>
<div class="a" style="left:0;top:322px;width:1059px;height:23px;background:#4d4c51"></div>
<div class="a" style="left:52px;top:325px;width:16px;height:16px;background:#e2e2e2;border:1px solid #5a5a5e"></div>
<div class="td" style="left:125px;top:322px;width:124px;color:#fff">EMA</div>
<div class="a" style="left:250px;top:322px;width:186px;height:23px;background:#4a494e"></div><div class="a" style="left:251px;top:324px;width:184px;height:20px;background:#c0c0c0;border-left:1px solid #a6a6a6;border-right:1px solid #9a9a9a;border-top:1px solid #b0b0b0;border-bottom:2px solid #a8a8a8"></div>
<div class="td" style="left:255px;top:322px;text-align:left;color:#8e8e8e">32768</div>
<div class="td" style="left:437px;top:322px;width:187px;color:#fff">保留的</div>
<div class="a" style="left:124px;top:0;width:1px;height:334px;background:#000"></div>
<div class="a" style="left:249px;top:0;width:1px;height:334px;background:#000"></div>
<div class="a" style="left:436px;top:0;width:1px;height:334px;background:#000"></div>
<div class="a" style="left:624px;top:0;width:1px;height:334px;background:#000"></div>
</div>
<div class="a" style="left:514px;top:563px;width:1059px;height:19px;background:#2d2d30"></div>
<div class="a" style="left:515px;top:563px;width:19px;height:19px;background:#141415"></div>
<div class="a" style="left:534px;top:563px;width:1px;height:19px;background:#3c3c3f"></div>
<svg class="a" style="left:515px;top:563px" width="19" height="19"><path d="M11,4.5 L6.5,9.5 L11,14" fill="none" stroke="#3a3a3c" stroke-width="1.4"/></svg>
<div class="a" style="left:512px;top:210px;width:1px;height:375px;background:#2c2c2e"></div>
<div class="a" style="left:512px;top:584px;width:1061px;height:1px;background:#2c2c2e"></div>
<div class="a" style="left:514px;top:582px;width:1059px;height:1px;background:#48484c"></div>
<div class="a" style="left:1468px;top:592px;width:110px;height:25px;border:1px solid #000;background:linear-gradient(#6c6c74,#45454d 60%,#3c3c44)"></div>
<div class="a" style="left:1483px;top:594px;font-size:15px;line-height:20px;color:#fff;white-space:nowrap">全部恢复到默认值</div>
<div class="a" style="left:511px;top:636px;width:390px;height:20px;border:2px solid #fff;border-radius:5px"></div>
</body>
</html>
